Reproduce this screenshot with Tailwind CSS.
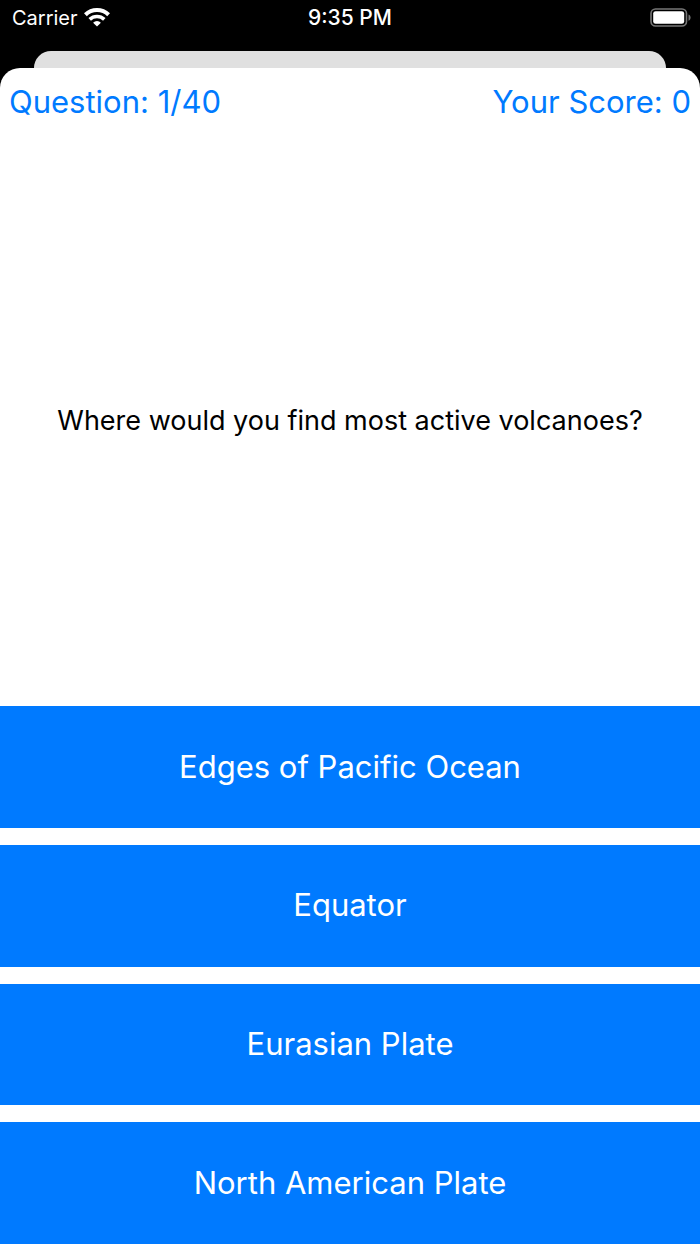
<!DOCTYPE html>
<html lang="en">

<head>
    <meta charset="UTF-8">
    <meta name="viewport" content="width=device-width, initial-scale=1.0">
    <title>Quiz</title>
    <script src="https://cdn.jsdelivr.net/npm/@tailwindcss/browser@4"></script>
</head>

<body class="flex min-h-screen flex-col bg-black font-['Inter',sans-serif]">
    <!-- Status bar -->
    <header class="grid h-9 grid-cols-3 items-center px-2 text-xl text-white">
        <div class="flex items-center gap-1.5 pl-1">
            <span>Carrier</span>
            <svg class="h-5 w-[26px]" viewBox="0 0 26 20" fill="none" stroke="currentColor" stroke-width="4" aria-label="Wi-Fi">
                <path d="M1.4 6.8a16.6 16.6 0 0 1 23.2 0" />
                <path d="M5.7 11.4a10.6 10.6 0 0 1 14.6 0" stroke-width="3.6" />
                <path d="M13 18.4l-3.9-3.7a5.6 5.6 0 0 1 7.8 0z" fill="currentColor" stroke="none" />
            </svg>
        </div>
        <span class="text-center text-[21px] font-medium">9:35 PM</span>
        <svg class="h-5 w-[42px] justify-self-end" viewBox="0 0 42 20" aria-label="Battery">
            <rect x="1" y="1" width="35.5" height="17" rx="4.5" fill="none" stroke="#777" stroke-width="1.6" />
            <rect x="3.2" y="3.2" width="31" height="12.6" rx="2.4" fill="#fff" />
            <path d="M38.5 6.5c2.8 1 2.8 5.2 0 6.2z" fill="#777" />
        </svg>
    </header>

    <!-- Edge of the screen behind the sheet -->
    <div class="mx-[34px] mt-[15px] h-[17px] rounded-t-[17px] bg-[#e0e0e0]"></div>

    <main class="flex flex-1 flex-col rounded-t-[20px] bg-white">
        <div class="flex justify-between px-[9px] pt-3 pb-3 text-[31px] leading-11 text-[#007aff]">
            <span>Question: 1/40</span>
            <span>Your Score: 0</span>
        </div>
        <div class="flex flex-1 items-center justify-center px-4">
            <h1 class="text-center text-[27px]">Where would you find most active volcanoes?</h1>
        </div>
        <div class="grid h-[538px] grid-rows-4 gap-[17px] text-[31px] text-white">
            <button type="button" class="bg-[#007aff]">Edges of Pacific Ocean</button>
            <button type="button" class="bg-[#007aff]">Equator</button>
            <button type="button" class="bg-[#007aff]">Eurasian Plate</button>
            <button type="button" class="bg-[#007aff]">North American Plate</button>
        </div>
    </main>
</body>

</html>
